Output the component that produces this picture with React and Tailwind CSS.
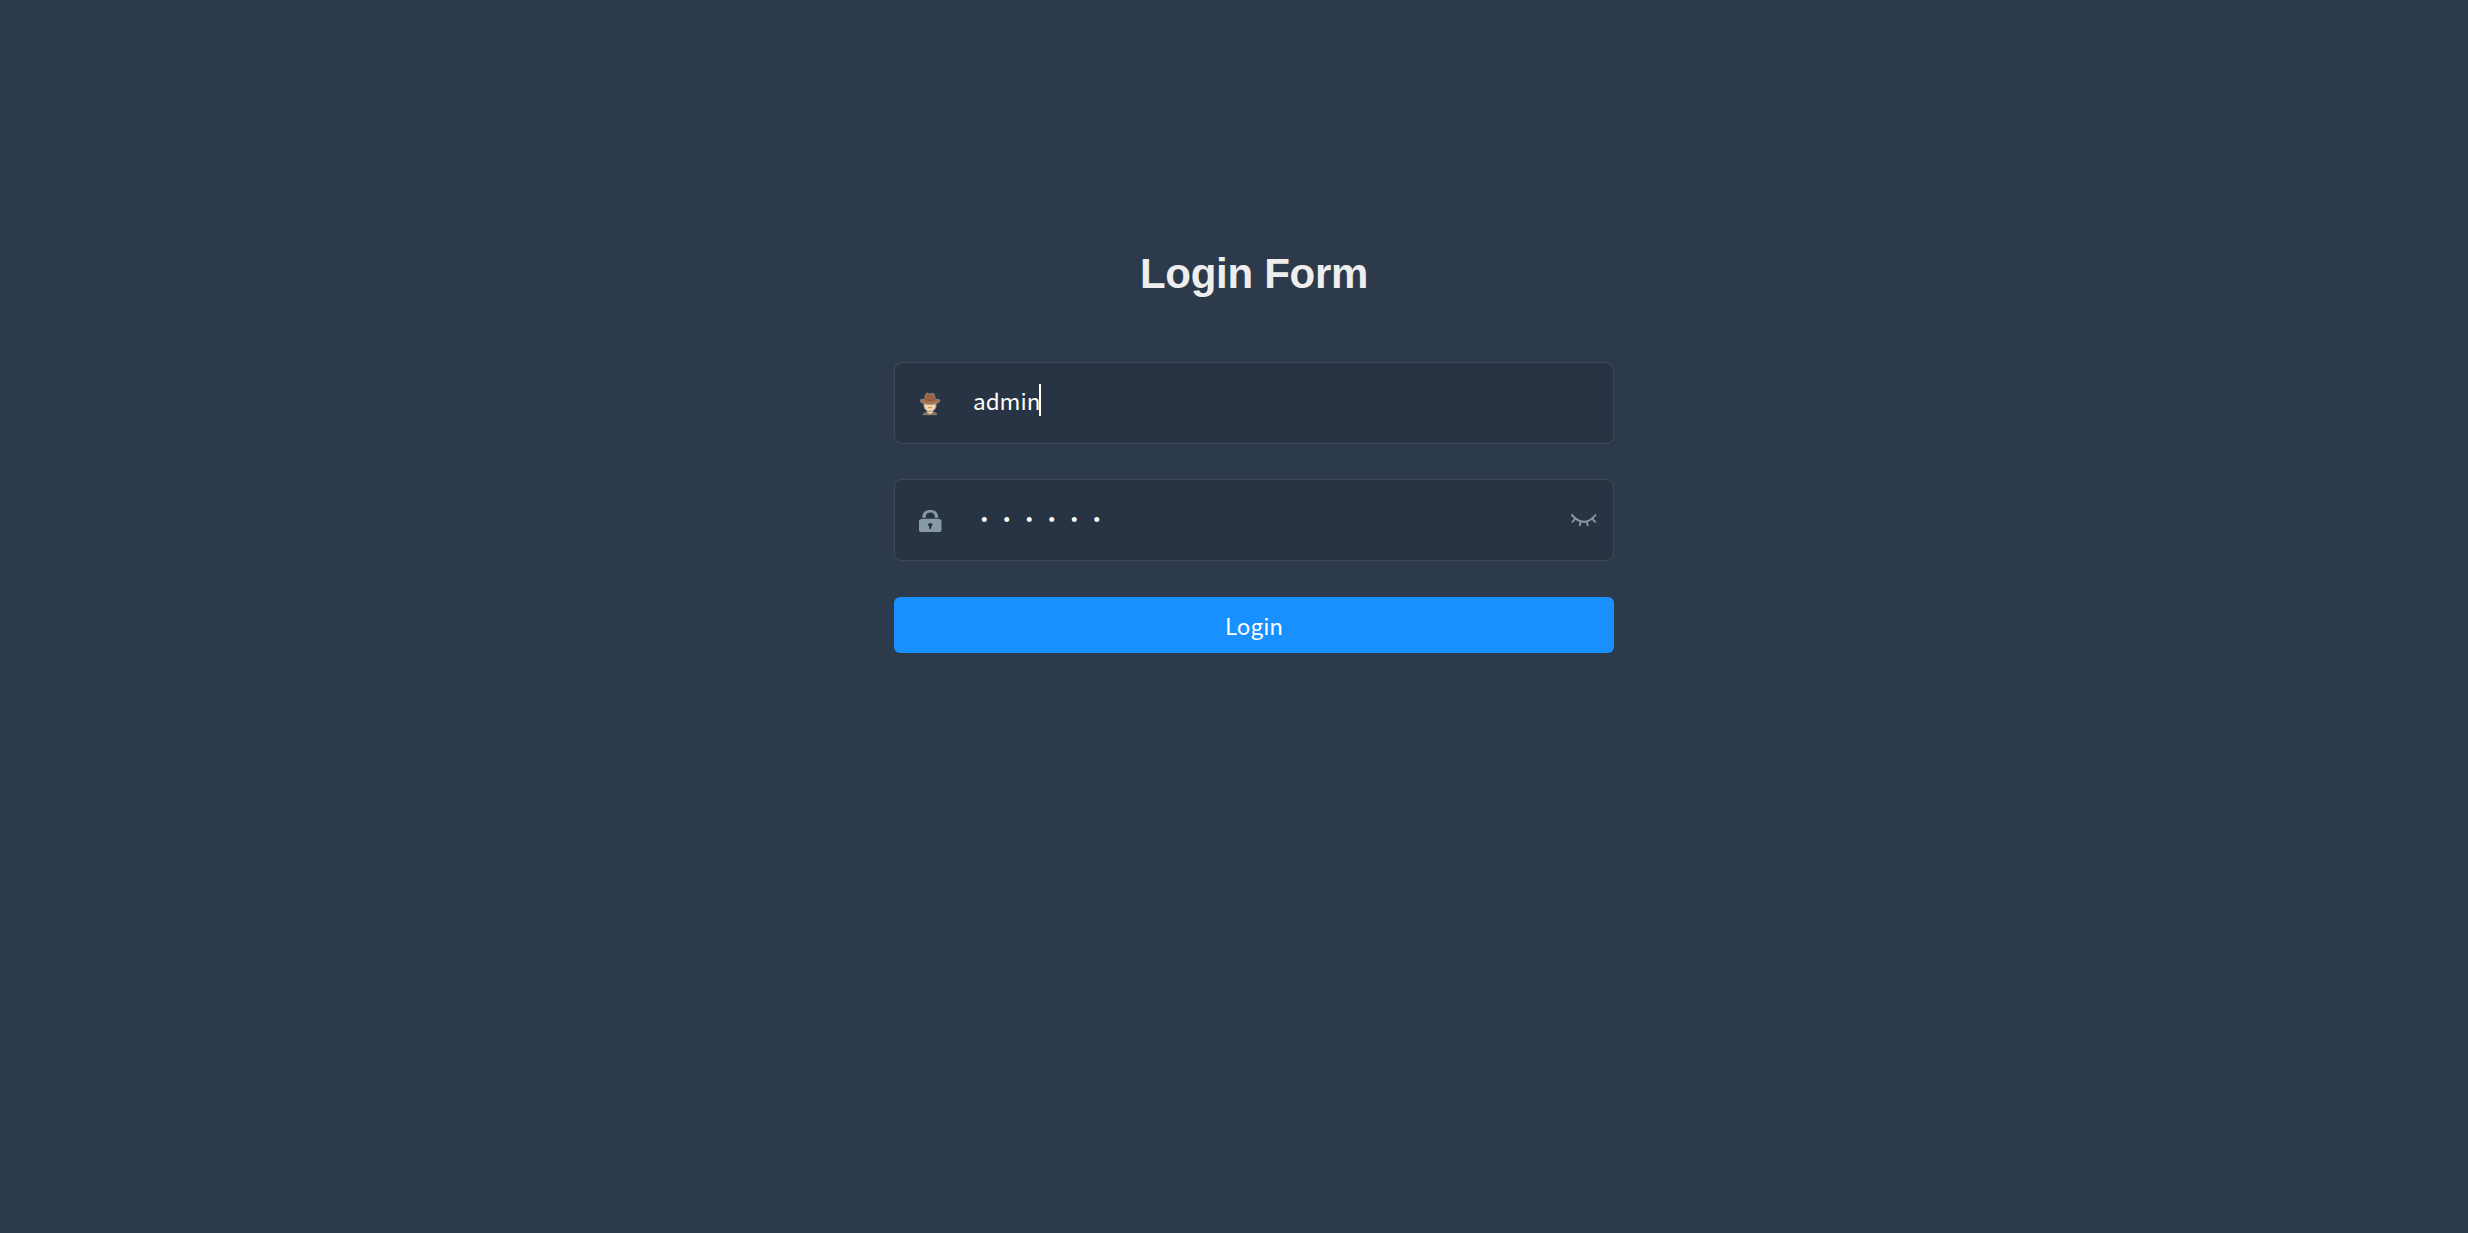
const FONT = "font-['Noto_Sans_CJK_SC','Noto_Sans',sans-serif]";

const UserIcon = () => (
  <svg width="22" height="24" viewBox="0 0 22 24">
    <path d="M4.2 22.700c.4-1.500 1.600-2.400 3.400-2.500h6.800c1.800.1 3 1 3.400 2.500z" fill="#9d6a48" stroke="#8c9399" strokeWidth=".7" />
    <path d="M8 17h6v3.400l-3 2.200-3-2.200z" fill="#e9c9a2" />
    <path d="M5 10.500h12v3.500c0 2.600-2.400 5.400-6 5.400S5 16.600 5 14z" fill="#f6d3a6" stroke="#8c9399" strokeWidth=".9" />
    <path d="M9.300 15.600h3.400" stroke="#b98a69" strokeWidth="1" />
    <path d="M5.700 8.900C6 4.300 6.300 1.400 8 1.200c1.200 0 1.800.9 3 .9s1.800-.9 3-.9c1.700.2 2 3.100 2.300 7.700z" fill="#9f623d" stroke="#8c8d8e" strokeWidth=".9" />
    <path d="M1.200 8.600c0-1.300 2-1.500 3.900-1.100 3.700.9 8.100.9 11.800 0 1.900-.4 3.900-.2 3.900 1.100 0 2.200-4.300 3.700-9.800 3.700S1.200 10.800 1.200 8.600z" fill="#a9704b" stroke="#8c8d8e" strokeWidth=".9" />
    <path d="M5.600 7.600c3.400.9 7.400.9 10.800 0" stroke="#7b452c" strokeWidth="1" fill="none" />
  </svg>
);

const LockIcon = () => (
  <svg width="22.5" height="22.5" viewBox="0 0 128 128" fill="currentColor">
    <path d="M108.8 44.322H89.6v-5.36c0-9.04-3.308-24.163-25.6-24.163-23.145 0-25.6 16.881-25.6 24.162v5.361H19.2v-5.36C19.2 15.281 36.798 0 64 0c27.202 0 44.8 15.281 44.8 38.961v5.361zm-32 39.356c0-5.44-5.763-9.832-12.8-9.832-7.037 0-12.8 4.392-12.8 9.832 0 3.682 2.567 6.808 6.407 8.477v11.205c0 2.718 2.962 4.92 6.4 4.92 3.438 0 6.4-2.202 6.4-4.92V92.155c3.833-1.669 6.393-4.795 6.393-8.477zM128 64v49.201c0 8.158-8.645 14.799-19.2 14.799H19.2C8.651 128 0 121.359 0 113.201V64c0-8.153 8.645-14.799 19.2-14.799h89.6c10.555 0 19.2 6.646 19.2 14.799z" />
  </svg>
);

const EyeClosedIcon = () => (
  <svg width="25.5" height="12.75" viewBox="0 0 128 64" fill="currentColor">
    <path d="M127.072 7.994c1.37-2.208.914-5.152-.914-6.87-2.056-1.717-4.797-1.226-6.396.982-.229.245-25.586 32.382-55.74 32.382-29.24 0-55.74-32.382-55.968-32.627-1.6-1.963-4.57-2.208-6.397-.49C-.17 3.086-.399 6.275 1.2 8.238c.457.736 5.94 7.36 14.62 14.72L4.17 35.96c-1.828 1.963-1.6 5.152.228 6.87.457.98 1.6 1.471 2.742 1.471s2.284-.49 3.198-1.472l12.564-13.983c5.94 4.416 13.021 8.587 20.788 11.53l-4.797 17.418c-.685 2.699.686 5.397 3.198 6.133h1.37c2.057 0 3.884-1.472 4.341-3.68L52.6 42.83c3.655.736 7.538 1.227 11.422 1.227 3.883 0 7.767-.49 11.422-1.227l4.797 17.173c.457 2.208 2.513 3.68 4.34 3.68.457 0 .914 0 1.143-.246 2.513-.736 3.883-3.434 3.198-6.133l-4.797-17.172c7.767-2.944 14.848-7.114 20.788-11.53l12.336 13.738c.913.981 2.056 1.472 3.198 1.472s2.284-.49 3.198-1.472c1.828-1.963 1.828-4.906.228-6.87l-11.65-13.001c9.366-7.36 14.849-14.474 14.849-14.474z" />
  </svg>
);

const Field = ({ icon, children, action }) => (
  <div className="flex h-[82px] items-center rounded-[8px] border border-white/10 bg-black/10 pr-[17px] text-[#889aa4]">
    <div className="flex w-[78px] shrink-0 pt-[2px] pl-6">{icon}</div>
    <div className="flex flex-1 items-center text-[22.5px] leading-8 text-white">{children}</div>
    {action}
  </div>
);

export default function App() {
  return (
    <div className={`min-h-screen bg-[#2d3a4b] pt-[250px] pl-[894px] ${FONT}`}>
      <form className="flex w-[720px] flex-col" onSubmit={(e) => e.preventDefault()}>
        <h3 className="mb-16 text-center font-['Liberation_Sans',Arial,sans-serif] text-[42px] leading-[48px] font-bold tracking-[-0.3px] text-[#eee]">
          Login Form
        </h3>
        <div className="flex flex-col gap-[35px]">
          <Field icon={<UserIcon />}>
            <span className="mb-[6px]">admin</span>
            <span className="mb-[6px] -ml-[1.5px] h-8 w-[2px] bg-white" />
          </Field>
          <Field icon={<LockIcon />} action={<EyeClosedIcon />}>
            <span className="mb-[5px]">••••••</span>
          </Field>
        </div>
        <button type="submit" className="mt-9 h-14 rounded-[6px] bg-[#1890ff] text-[22.5px] leading-none text-white">
          Login
        </button>
      </form>
    </div>
  );
}
